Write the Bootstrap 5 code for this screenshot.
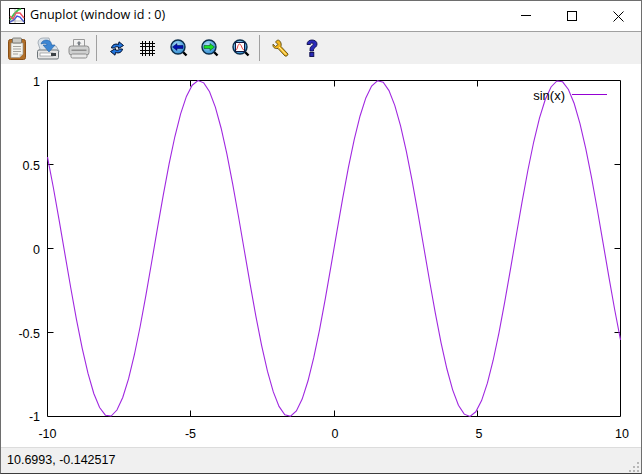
<!DOCTYPE html>
<html lang="en">
<head>
<meta charset="utf-8">
<title>Gnuplot (window id : 0)</title>
<link href="https://cdn.jsdelivr.net/npm/bootstrap@5.3.0/dist/css/bootstrap.min.css" rel="stylesheet">
<style>
html,body{height:100%;margin:0;overflow:hidden;background:#fff}
.gp-window{height:474px;width:642px;border:1px solid #6e6e6e;border-bottom-color:#3c3c3c;font-family:"Open Sans","Liberation Sans",sans-serif;color:#000}
.gp-title{height:30px;font-size:12.6px;line-height:1;padding-left:8px;background:#fff;gap:5px}
.gp-title-text{padding-bottom:1px}
.gp-ctl{width:46px;height:30px}
.gp-toolbar{height:33px;background:#f0f0f0;border-top:1px solid #a0a0a0;padding-left:0}
.gp-tool{width:31px;height:32px;padding:0;border:0;background:transparent}
.gp-sep{width:1px;height:26px;background:#a0a0a0;margin:0 4px 0 2px}
.gp-sep-last{margin:0 5px 0 3px}
.gp-plot{flex:1 1 auto;min-height:0;background:#fff;line-height:0}
.gp-plot svg{width:640px;height:383px;display:block}
.gp-plot text{font-family:"Liberation Sans",Arial,sans-serif;font-size:12.5px;fill:#000}
.gp-plot text.gp-key{font-size:13px}
.gp-status{height:26px;background:#f0f0f0;border-top:1px solid #dcdcdc;font-family:"Liberation Sans",Arial,sans-serif;font-size:12.5px;padding-left:6px}
.gp-grip{align-self:flex-end}
</style>
</head>
<body>
<div class="gp-window d-flex flex-column">
  <div class="gp-title d-flex align-items-center">
    <svg width="16" height="16" viewBox="0 0 16 16" class="flex-shrink-0">
      <rect x=".5" y=".5" width="15" height="15" fill="#fff" stroke="#000"/>
      <path d="M1 12 5 6 9 2 12 1" fill="none" stroke="#3fc24a" stroke-width="1.800"/>
      <path d="M1 8 4 11 7 5 11 5 15 10" fill="none" stroke="#f05060" stroke-width="1.400"/>
      <path d="M1 14 5 12 8 8 11 9 15 14" fill="none" stroke="#4050e0" stroke-width="1.400"/>
      <path d="M1 13H15M6 1V15" stroke="#909090" stroke-width=".6"/>
    </svg>
    <span class="gp-title-text flex-grow-1">Gnuplot (window id : 0)</span>
    <div class="d-flex">
      <div class="gp-ctl d-flex align-items-center justify-content-center"><svg width="10" height="10"><path d="M0 4.500H10" stroke="#000"/></svg></div>
      <div class="gp-ctl d-flex align-items-center justify-content-center"><svg width="10" height="10"><rect x=".5" y=".5" width="9" height="9" fill="none" stroke="#000"/></svg></div>
      <div class="gp-ctl d-flex align-items-center justify-content-center"><svg width="11" height="11"><path d="M.5.5 10.500 10.500M10.500.5 .5 10.500" stroke="#000"/></svg></div>
    </div>
  </div>

  <div class="gp-toolbar d-flex align-items-center">
    <button class="gp-tool d-flex align-items-center justify-content-center" title="Copy">
      <svg width="20" height="23" viewBox="0 0 20 23">
        <rect x="1.500" y="2.500" width="17" height="20" rx="2" fill="#b06f2a" stroke="#8a4f14"/>
        <path d="M4 6H16V17L12.500 20.500H4Z" fill="#f3f3ee" stroke="#9a9a94" stroke-width=".7"/>
        <path d="M6 9.500H14M6 12H14M6 14.500H14M6 17H11" stroke="#9a9a94" stroke-width=".9"/>
        <path d="M12.500 20.500V17H16Z" fill="#cfcfc8"/>
        <rect x="5.500" y="1" width="9" height="5" rx="1" fill="#c9c9c4" stroke="#6a6a66" stroke-width=".8"/>
      </svg>
    </button>
    <button class="gp-tool d-flex align-items-center justify-content-center" title="Export">
      <svg width="24" height="23" viewBox="0 0 24 23">
        <path d="M4 12 2 6C2 3 4 1 7 1H13L15 8 20 9 23 14V15H2Z" fill="#dbe3ea" stroke="#8c97a2" stroke-width=".7"/>
        <rect x="1.500" y="13" width="21" height="9" rx="1.500" fill="#e6e6e6" stroke="#6c7478"/>
        <rect x="4" y="16" width="13" height="3" fill="#fff" stroke="#7f8488" stroke-width=".6"/>
        <rect x="15" y="16" width="5" height="3" fill="#3c4246"/>
        <path d="M5 7C6 3 10 2.500 12.500 3.500 15 4.500 15.500 6 15.500 8H19L13 15 7 8H11C11 6.500 8.500 5.800 5 7Z" fill="#3c86d3" stroke="#245fa3" stroke-width=".6"/>
      </svg>
    </button>
    <button class="gp-tool d-flex align-items-center justify-content-center" title="Print">
      <svg width="22" height="21" viewBox="0 0 22 21">
        <path d="M5.500 9V1.500H16.500V9Z" fill="#f2f2f2" stroke="#9a9a9a"/>
        <path d="M11 3 8.500 5.500H10V7.500H12V5.500H13.500Z" fill="#7c8288"/>
        <rect x="1" y="8" width="20" height="9" rx="2.500" fill="#cfd0d0" stroke="#8c8c8c"/>
        <rect x="3.500" y="11.500" width="15" height="1.500" fill="#8e8e8e"/>
        <rect x="3" y="16" width="16" height="4" rx="1.500" fill="#e8e8e8" stroke="#8c8c8c"/>
      </svg>
    </button>
    <div class="gp-sep"></div>
    <button class="gp-tool d-flex align-items-center justify-content-center" title="Replot">
      <svg width="14" height="15" viewBox="0 0 14 15">
        <path d="M1.500 7C2 3.800 5 2.300 8.500 3.500L9 .8 13.500 4.500 8.500 7.500V6C6 5.300 5 6 4.500 7Z" fill="#2277e0" stroke="#001030"/>
        <path d="M12.500 8C12 11.200 9 12.700 5.500 11.500L5 14.200 .5 10.500 5.500 7.500V9C8 9.700 9 9 9.500 8Z" fill="#2277e0" stroke="#001030"/>
      </svg>
    </button>
    <button class="gp-tool d-flex align-items-center justify-content-center" title="Grid">
      <svg width="15" height="15" viewBox="0 0 15 15">
        <path d="M2.500 0V15M5.500 0V15M9.500 0V15M12.500 0V15M0 2.500H15M0 5.500H15M0 9.500H15M0 12.500H15" stroke="#000" stroke-width="1"/>
      </svg>
    </button>
    <button class="gp-tool d-flex align-items-center justify-content-center" title="Previous zoom">
      <svg width="18" height="18" viewBox="0 0 18 18">
        <defs><radialGradient id="lens" cx=".4" cy=".35" r=".7"><stop offset="0" stop-color="#a9dcf7"/><stop offset="1" stop-color="#2a88d0"/></radialGradient></defs>
        <path d="M12 12 16.500 16.500" stroke="#000" stroke-width="2.400"/>
        <circle cx="8" cy="8" r="7" fill="url(#lens)" stroke="#0b2d4a" stroke-width="1.400"/>
        <path d="M2.500 8 7 4.500V6.500H13V9.500H7V11.500Z" fill="#0010b0" stroke="#000050" stroke-width=".5"/>
      </svg>
    </button>
    <button class="gp-tool d-flex align-items-center justify-content-center" title="Next zoom">
      <svg width="18" height="18" viewBox="0 0 18 18">
        <path d="M12 12 16.500 16.500" stroke="#000" stroke-width="2.400"/>
        <circle cx="8" cy="8" r="7" fill="url(#lens)" stroke="#0b2d4a" stroke-width="1.400"/>
        <path d="M13.500 8 9 4.500V6.500H3V9.500H9V11.500Z" fill="#18e028" stroke="#004010" stroke-width=".5"/>
      </svg>
    </button>
    <button class="gp-tool d-flex align-items-center justify-content-center" title="Autoscale">
      <svg width="18" height="18" viewBox="0 0 18 18">
        <path d="M12 12 16.500 16.500" stroke="#000" stroke-width="2.400"/>
        <circle cx="8" cy="8" r="7" fill="url(#lens)" stroke="#0b2d4a" stroke-width="1.400"/>
        <rect x="3.500" y="3.500" width="9" height="9" fill="#fff" stroke="#101840"/>
        <path d="M4 11C5.500 11 5.500 5 7.500 5S10 11 12 11" fill="none" stroke="#e84040"/>
      </svg>
    </button>
    <div class="gp-sep gp-sep-last"></div>
    <button class="gp-tool d-flex align-items-center justify-content-center" title="Options">
      <svg width="17" height="18" viewBox="0 0 17 18">
        <path d="M5.500 1 3.500 3 6 5.500 3.500 7.500 1 5.200C.5 8 2.500 10 6 9.500L13 17C14.500 17.500 16 16.500 16 15L9 7.500C9.800 4 8 1 5.500 1Z" fill="#f3b61f" stroke="#5a4a10" stroke-width=".9"/>
        <path d="M7 8 14 15.500" stroke="#fff2a8" stroke-width="1"/>
      </svg>
    </button>
    <button class="gp-tool d-flex align-items-center justify-content-center" title="Help">
      <svg width="12" height="19" viewBox="0 0 12 19">
        <path d="M1 5.500C1 2.500 3.200 1 6 1S11 2.500 11 5C11 7 9.800 8 8.500 9 7.700 9.600 7.500 10.200 7.500 12H4V10.500C4 8.600 4.800 7.600 6 6.700 7 6 7.300 5.500 7.300 5S6.800 4 6 4 4.500 4.500 4.400 5.500Z" fill="#2a2ab8" stroke="#0b0b4a" stroke-width=".9"/>
        <rect x="3.800" y="13.500" width="4" height="4" fill="#2a2ab8" stroke="#0b0b4a" stroke-width=".9"/>
      </svg>
    </button>
  </div>

  <div class="gp-plot">
    <svg viewBox="1 64 640 383" xmlns="http://www.w3.org/2000/svg">
      <path fill="none" stroke="#000" stroke-width="1" d="M47.500 80.500H620.500V416.500H47.500Z
        M47.500 164.500h6M47.500 248.500h6M47.500 332.500h6M620.500 164.500h-6M620.500 248.500h-6M620.500 332.500h-6
        M190.500 416.500v-6M334.500 416.500v-6M477.500 416.500v-6M190.500 80.500v6M334.500 80.500v6M477.500 80.500v6"/>
      <polyline id="gp-curve" fill="none" stroke="#a028e0" stroke-width="1.100" points=""/>
      <g text-anchor="end">
        <text x="40" y="86">1</text>
        <text x="40" y="170">0.5</text>
        <text x="40" y="254">0</text>
        <text x="40" y="338">-0.5</text>
        <text x="40" y="421">-1</text>
      </g>
      <g text-anchor="middle">
        <text x="47.500" y="438">-10</text>
        <text x="190.500" y="438">-5</text>
        <text x="335" y="438">0</text>
        <text x="479" y="438">5</text>
        <text x="622" y="438">10</text>
      </g>
      <text class="gp-key" x="565" y="100" text-anchor="end">sin(x)</text>
      <path d="M572 94.500H607" stroke="#9400d3" stroke-width="1"/>
    </svg>
  </div>

  <div class="gp-status d-flex align-items-center justify-content-between">
    <span>10.6993, -0.142517</span>
    <svg class="gp-grip" width="12" height="12" viewBox="0 0 12 12">
      <path d="M8 1h2v2H8zM4 5h2v2H4zM8 5h2v2H8zM0 9h2v2H0zM4 9h2v2H4zM8 9h2v2H8z" fill="#b8b8b8"/>
    </svg>
  </div>
</div>
<script src="https://cdn.jsdelivr.net/npm/bootstrap@5.3.0/dist/js/bootstrap.bundle.min.js"></script>
<script>
var pts=[];
for(var i=0;i<100;i++){
  var x=-10+20*i/99;
  pts.push((47.5+(x+10)/20*573).toFixed(2)+","+(248.5-Math.sin(x)*168).toFixed(2));
}
document.getElementById("gp-curve").setAttribute("points",pts.join(" "));
</script>
</body>
</html>
